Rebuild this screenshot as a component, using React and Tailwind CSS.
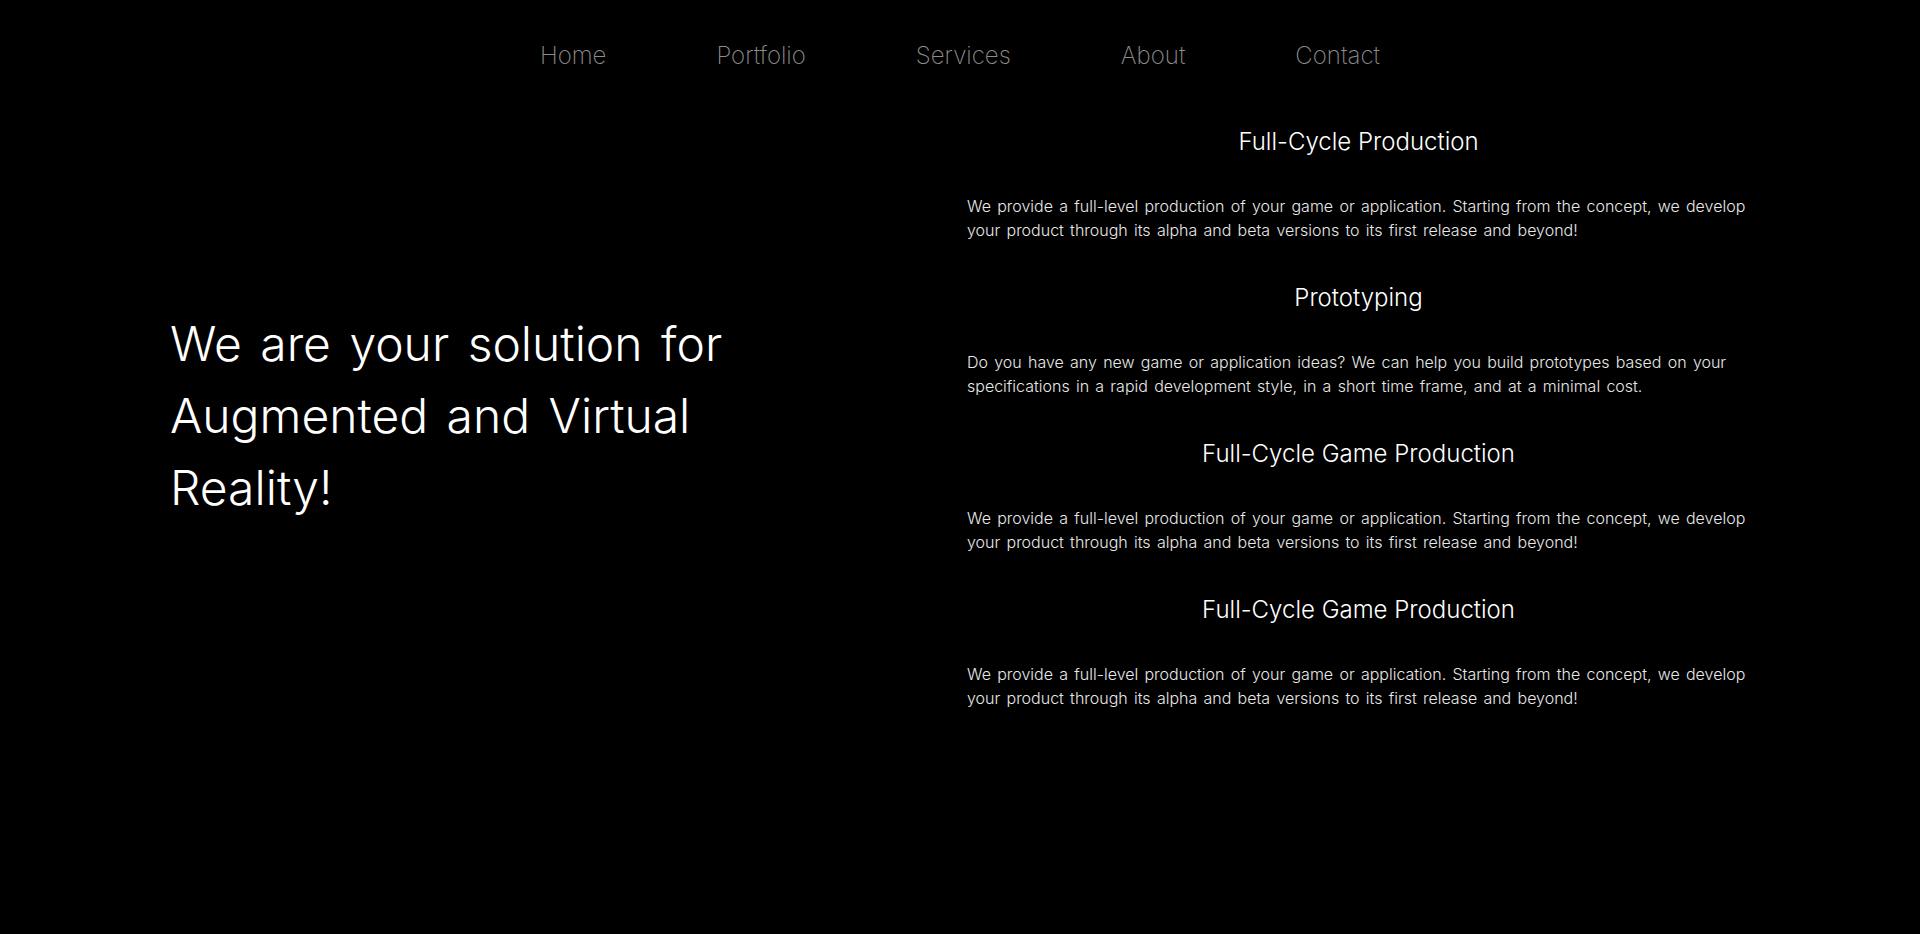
import React from 'react';

const navLinks = ['Home', 'Portfolio', 'Services', 'About', 'Contact'];

const fullCycleText =
    'We provide a full-level production of your game or application. Starting from the concept, we develop your product through its alpha and beta versions to its first release and beyond!';

// Services shown in the right column
const services = [
    { title: 'Full-Cycle Production', text: fullCycleText },
    {
        title: 'Prototyping',
        text: 'Do you have any new game or application ideas? We can help you build prototypes based on your specifications in a rapid development style, in a short time frame, and at a minimal cost.',
    },
    { title: 'Full-Cycle Game Production', text: fullCycleText },
    { title: 'Full-Cycle Game Production', text: fullCycleText },
];

export default function App() {
    return (
        <div className="min-h-[934px] w-full bg-black text-white font-['Inter','Liberation_Sans',sans-serif]">
            {/* Top navigation */}
            <nav className="h-[110px] pt-[2px] flex items-center justify-center gap-[110px]">
                {navLinks.map((link) => (
                    <a key={link} href="#" className="text-[24px] leading-8 font-extralight text-[#8c8c8c]">
                        {link}
                    </a>
                ))}
            </nav>

            <main className="flex items-center justify-between px-[170px] pt-[14px]">
                <div className="w-[783px]">
                    <h1 className="mb-[2px] text-[48px] leading-[72px] font-light text-white [word-spacing:5px]">
                        We are your solution for
                        <br />
                        Augmented and Virtual
                        <br />
                        Reality!
                    </h1>
                </div>

                <div className="w-[783px] flex flex-col gap-[38px]">
                    {services.map((service, i) => (
                        <section key={i} className="flex flex-col">
                            <h2 className="pt-[2px] mb-[36px] text-[24px] leading-8 font-light text-center text-white">
                                {service.title}
                            </h2>
                            <p className="text-[16px] leading-6 font-light text-[#e8e8e8] [word-spacing:1.75px]">
                                {service.text}
                            </p>
                        </section>
                    ))}
                </div>
            </main>
        </div>
    );
}
